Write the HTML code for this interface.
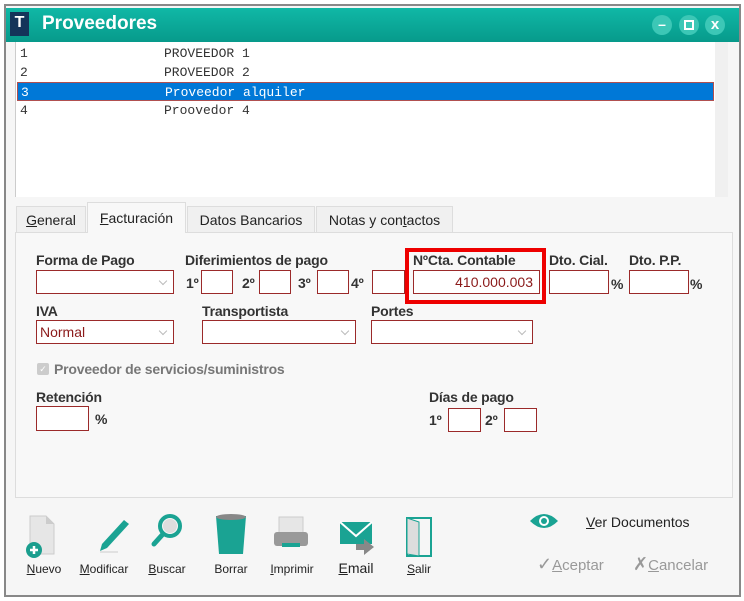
<!DOCTYPE html>
<html><head><meta charset="utf-8"><style>
*{box-sizing:border-box;margin:0;padding:0}
body{width:744px;height:601px;background:#fff;font-family:"Liberation Sans",sans-serif;position:relative;overflow:hidden}
.a{position:absolute}
.lbl{position:absolute;font-weight:bold;font-size:14px;color:#333;letter-spacing:-0.2px}
.box{position:absolute;border:1px solid #9b2a2a;background:#fff}
.combo:after{content:"";position:absolute;right:7px;top:7px;width:5px;height:5px;border-right:1px solid #bbb;border-bottom:1px solid #bbb;transform:rotate(45deg)}
.row{position:absolute;left:17px;width:697px;height:19px;font-family:"Liberation Mono",monospace;font-size:13px;color:#333;line-height:19px}
.row span{position:absolute;left:147px}
.row b{font-weight:normal;position:absolute;left:3px}
.tab{position:absolute;border:1px solid #ddd;border-bottom:none;background:#f0f0f0;font-size:14px;color:#222;text-align:center}
.tl{position:absolute;font-size:12px;color:#222;text-align:center;width:60px}
u{text-decoration:underline}
</style></head><body>
<div class="a" style="left:4px;top:4px;width:737px;height:593px;border:2px solid #888;background:#f6f6f6"></div>
<div class="a" style="left:6px;top:8px;width:733px;height:34px;background:linear-gradient(#10b8a6,#079a8b)"></div>
<div class="a" style="left:10px;top:12px;width:19px;height:24px;background:#14345a;color:#fff;font-weight:bold;font-size:16px;text-align:center;line-height:22px">T</div>
<div class="a" style="left:42px;top:13px;color:#fff;font-weight:bold;font-size:19px">Proveedores</div>
<div class="a" style="left:652px;top:15px;width:20px;height:20px;border-radius:50%;background:#3cc7b6;color:#fff;font-weight:bold;text-align:center;line-height:19px;font-size:14px">–</div>
<div class="a" style="left:679px;top:15px;width:20px;height:20px;border-radius:50%;background:#3cc7b6"><div class="a" style="left:5px;top:5px;width:10px;height:10px;border:2px solid #fff"></div></div>
<div class="a" style="left:705px;top:15px;width:20px;height:20px;border-radius:50%;background:#3cc7b6;color:#fff;font-weight:bold;text-align:center;line-height:20px;font-size:15px">x</div>
<div class="a" style="left:15px;top:42px;width:713px;height:155px;background:#fff;border-left:1px solid #ccc"></div>
<div class="a" style="left:715px;top:42px;width:13px;height:155px;background:#f0f0f0"></div>
<div class="row" style="top:44px"><b>1</b><span>PROVEEDOR 1</span></div>
<div class="row" style="top:63px"><b>2</b><span>PROVEEDOR 2</span></div>
<div class="row" style="top:82px;background:#0078d7;color:#fff;border:1px solid #b05050"><b>3</b><span>Proveedor alquiler</span></div>
<div class="row" style="top:101px"><b>4</b><span>Proovedor 4</span></div>
<div class="a" style="left:15px;top:232px;width:718px;height:266px;border:1px solid #ddd;background:#f8f8f8"></div>
<div class="tab" style="left:16px;top:206px;width:70px;height:26px;line-height:26px"><u>G</u>eneral</div>
<div class="tab" style="left:87px;top:202px;width:99px;height:31px;line-height:30px;background:#f8f8f8"><u>F</u>acturación</div>
<div class="tab" style="left:187px;top:206px;width:128px;height:26px;line-height:26px">Datos Bancarios</div>
<div class="tab" style="left:316px;top:206px;width:137px;height:26px;line-height:26px">Notas y con<u>t</u>actos</div>
<div class="lbl" style="left:36px;top:252px">Forma de Pago</div>
<div class="box combo" style="left:36px;top:270px;width:138px;height:24px"></div>
<div class="lbl" style="left:185px;top:252px">Diferimientos de pago</div>
<div class="lbl" style="left:186px;top:275px">1º</div><div class="box" style="left:201px;top:270px;width:32px;height:24px"></div>
<div class="lbl" style="left:242px;top:275px">2º</div><div class="box" style="left:259px;top:270px;width:32px;height:24px"></div>
<div class="lbl" style="left:298px;top:275px">3º</div><div class="box" style="left:317px;top:270px;width:32px;height:24px"></div>
<div class="lbl" style="left:351px;top:275px">4º</div><div class="box" style="left:372px;top:270px;width:33px;height:24px"></div>
<div class="a" style="left:405px;top:248px;width:141px;height:56px;border:4px solid #e00"></div>
<div class="lbl" style="left:413px;top:252px">NºCta. Contable</div>
<div class="box" style="left:413px;top:270px;width:127px;height:24px;color:#8b1a1a;font-size:14px;text-align:right;padding-right:6px;line-height:22px">410.000.003</div>
<div class="lbl" style="left:549px;top:252px">Dto. Cial.</div>
<div class="box" style="left:549px;top:270px;width:60px;height:24px"></div><div class="lbl" style="left:611px;top:276px">%</div>
<div class="lbl" style="left:629px;top:252px">Dto. P.P.</div>
<div class="box" style="left:629px;top:270px;width:60px;height:24px"></div><div class="lbl" style="left:690px;top:276px">%</div>
<div class="lbl" style="left:36px;top:303px">IVA</div>
<div class="box combo" style="left:36px;top:320px;width:138px;height:24px;color:#8b1a1a;font-size:14px;line-height:22px;padding-left:3px">Normal</div>
<div class="lbl" style="left:202px;top:303px">Transportista</div>
<div class="box combo" style="left:202px;top:320px;width:154px;height:24px"></div>
<div class="lbl" style="left:371px;top:303px">Portes</div>
<div class="box combo" style="left:371px;top:320px;width:162px;height:24px"></div>
<div class="a" style="left:37px;top:363px;width:12px;height:12px;background:#ccc;border-radius:2px;color:#fff;font-size:9px;text-align:center;line-height:12px">✓</div>
<div class="lbl" style="left:54px;top:361px;color:#777">Proveedor de servicios/suministros</div>
<div class="lbl" style="left:36px;top:389px">Retención</div>
<div class="box" style="left:36px;top:406px;width:53px;height:25px"></div><div class="lbl" style="left:95px;top:411px">%</div>
<div class="lbl" style="left:429px;top:389px">Días de pago</div>
<div class="lbl" style="left:429px;top:412px">1º</div><div class="box" style="left:448px;top:408px;width:33px;height:24px"></div>
<div class="lbl" style="left:485px;top:412px">2º</div><div class="box" style="left:504px;top:408px;width:33px;height:24px"></div>
<!-- toolbar icons -->
<svg class="a" style="left:20px;top:512px" width="420" height="48">
<path d="M10 4h16l8 8v30H10z" fill="#e6e6e6" stroke="#ccc"/><path d="M26 4v8h8" fill="#ccc"/>
<circle cx="14" cy="38" r="8" fill="#1a9e8e"/><path d="M14 34v8M10 38h8" stroke="#fff" stroke-width="2.5"/>
<path d="M82 32l22-24 5 4-22 24-7 3z" fill="#1aa393"/><path d="M80 40h18" stroke="#ccc"/>
<circle cx="150" cy="14" r="10" fill="none" stroke="#1aa393" stroke-width="4"/><circle cx="150" cy="14" r="7" fill="#ddd"/><path d="M143 22l-9 10" stroke="#1aa393" stroke-width="5" stroke-linecap="round"/>
<path d="M196 4h30l-3 38h-24z" fill="#1aa393"/><ellipse cx="211" cy="5" rx="15" ry="3" fill="#888"/>
<rect x="259" y="5" width="24" height="18" fill="#e6e6e6" stroke="#ccc"/><rect x="254" y="20" width="34" height="14" rx="3" fill="#999"/><rect x="262" y="31" width="18" height="4" fill="#1aa393"/>
<rect x="320" y="10" width="32" height="22" fill="#1aa393"/><path d="M320 10l16 14 16-14" stroke="#fff" stroke-width="2" fill="none"/><path d="M336 32h8v-5l10 8-10 8v-5h-8z" fill="#888"/>
<rect x="387" y="6" width="24" height="38" fill="none" stroke="#1aa393" stroke-width="2"/><path d="M387 6l12 4v34l-12-2z" fill="#ddd" stroke="#1aa393"/>
</svg>
<div class="tl" style="left:14px;top:562px"><u>N</u>uevo</div>
<div class="tl" style="left:74px;top:562px"><u>M</u>odificar</div>
<div class="tl" style="left:137px;top:562px"><u>B</u>uscar</div>
<div class="tl" style="left:201px;top:562px">Borrar</div>
<div class="tl" style="left:262px;top:562px"><u>I</u>mprimir</div>
<div class="tl" style="left:326px;top:560px;font-size:14px"><u>E</u>mail</div>
<div class="tl" style="left:389px;top:562px"><u>S</u>alir</div>
<svg class="a" style="left:529px;top:511px" width="30" height="20"><path d="M1 10Q15 -4 29 10Q15 24 1 10z" fill="#1aa393"/><circle cx="15" cy="10" r="5" fill="#fff"/><circle cx="15" cy="10" r="3" fill="#1aa393"/></svg>
<div class="a" style="left:586px;top:514px;font-size:14px;color:#222"><u>V</u>er Documentos</div>
<div class="a" style="left:537px;top:554px;font-size:15px;color:#999"><span style="font-size:18px">✓</span><u>A</u>ceptar</div>
<div class="a" style="left:633px;top:554px;font-size:15px;color:#999"><span style="font-size:18px">✗</span><u>C</u>ancelar</div>
</body></html>
